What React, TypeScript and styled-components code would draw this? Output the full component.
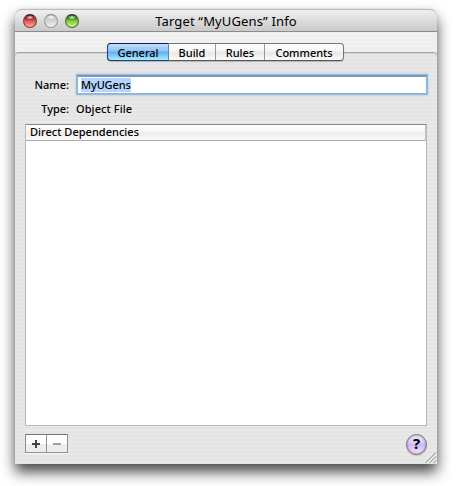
import React from "react";
import styled, { createGlobalStyle } from "styled-components";

const GlobalStyle = createGlobalStyle`
  * { box-sizing: border-box; }
  html, body { margin: 0; background: #fff; overflow: hidden; }
  body { font-family: "Noto Sans", "Open Sans", sans-serif; font-size: 11px; color: #000; }
`;

const Desktop = styled.main`
  width: 457px;
  height: 486px;
  padding: 9px 20px 22px 15px;
  overflow: hidden;
`;

const Window = styled.section`
  position: relative;
  width: 422px;
  height: 455px;
  display: flex;
  flex-direction: column;
  border-radius: 7px 7px 0 0;
  background: repeating-linear-gradient(#e8e8e8 0 2px, #e4e4e4 2px 4px);
  box-shadow: 0 8px 14px rgba(0, 0, 0, 0.72), 0 0 2px rgba(0, 0, 0, 0.12);
`;

const TitleBar = styled.header`
  height: 23px;
  flex: none;
  display: grid;
  grid-template-columns: 70px 1fr 70px;
  align-items: center;
  border: 1px solid #b9b9b9;
  border-width: 1px 0 1px;
  border-bottom-color: #8c8c8c;
  border-radius: 7px 7px 0 0;
  background: linear-gradient(#f0f0f0, #dedede 45%, #c9c9c9);
`;

const Lights = styled.div`
  display: flex;
  gap: 7px;
  padding: 1px 0 0 8px;
`;

const Light = styled.span<{ $tone: "red" | "gray" | "green" }>`
  width: 14px;
  height: 14px;
  border-radius: 50%;
  border: 1px solid ${p => ({ red: "#7a3a3c", gray: "#999", green: "#4d683b" })[p.$tone]};
  border-top-color: ${p => ({ red: "#3a2022", gray: "#858585", green: "#243b1e" })[p.$tone]};
  background: ${p => ({
    red: "radial-gradient(ellipse 4px 2px at 50% 20%, #f6dcdc, transparent), linear-gradient(#642228 5%, #b33a3e 35%, #e0574f 50%, #ffa9a0)",
    gray: "radial-gradient(ellipse 4px 2px at 50% 18%, #fff, transparent), linear-gradient(#c4c4c4, #d3d3d3 50%, #f2f2f2)",
    green: "radial-gradient(ellipse 4px 2px at 50% 20%, #e9f5df, transparent), linear-gradient(#2f5a1d 5%, #569b2a 35%, #7fca3c 50%, #ceff80)",
  })[p.$tone]};
`;

const Title = styled.h1`
  margin: 0;
  text-align: center;
  font-size: 13px;
  font-weight: 400;
  line-height: 20px;
  letter-spacing: 0.14px;
  white-space: nowrap;
`;

const TabStrip = styled.nav`
  height: 31px;
  flex: none;
  display: flex;
  padding-top: 11px;
  background: linear-gradient(rgba(255, 255, 255, 0.42) 0 20px, transparent 20px);
`;

const Rule = styled.span<{ $side: "left" | "right" }>`
  flex: ${p => (p.$side === "left" ? "0 0 92px" : "1")};
  height: 8px;
  margin-top: 9px;
  border-top: 1px solid #a4a4a4;
  border-radius: ${p => (p.$side === "left" ? "4px 0 0 0" : "0 4px 0 0")};
  box-shadow: inset 0 1px #d3d3d3;
`;

const Tabs = styled.div`
  display: flex;
  width: 237px;
  height: 18px;
  border: 1px solid #777;
  border-bottom-color: #565656;
  border-radius: 4px;
  background: linear-gradient(#fff, #f5f5f5 45%, #e8e8e8 50%, #fafafa);
  box-shadow: 0 1px 1px #b4b4b4;
`;

const Tab = styled.button<{ $width: number; $active?: boolean }>`
  width: ${p => p.$width}px;
  height: ${p => (p.$active ? 18 : 16)}px;
  margin: ${p => (p.$active ? "-1px 0 -1px -1px" : "0")};
  padding: 0;
  border: 0 solid #9a9a9a;
  border-right-width: 1px;
  ${p => p.$active && "border: 1px solid #203e79; border-top-color: #141365; border-right-color: #5687b4; border-radius: 4px 0 0 4px;"}
  background: ${p => p.$active ? "linear-gradient(#c2e0fb, #91c3f5 43%, #65adf0 50%, #a7edff)" : "transparent"};
  font: 500 11px/15px "Noto Sans", sans-serif;
  letter-spacing: -0.02px;
  color: #000;
  &:last-child { border-right: 0; }
`;

const Form = styled.div`
  height: 61px;
  flex: none;
  display: grid;
  grid-template-columns: 54px 1fr;
  grid-template-rows: 23px 25px;
  column-gap: 7px;
  align-items: center;
  padding: 10px 10px 0 0;
`;

const Label = styled.label`
  text-align: right;
  line-height: 18px;
  font-weight: 500;
  letter-spacing: -0.02px;
`;

const Field = styled.div`
  height: 19px;
  margin: 0 0 0 1px;
  padding: 1px 3px;
  border: 1px solid #91b2d2;
  border-top: 2px solid #7899b9;
  background: #fff;
  box-shadow: 0 0 0 1px #92b9de, 0 0 2px 1px #9dc7ef;
`;

const Selection = styled.span`
  display: block;
  width: 50px;
  height: 14px;
  background: #b4d5fe;
  line-height: 13px;
  font-weight: 500;
  letter-spacing: -0.14px;
`;

const Value = styled.span`
  line-height: 18px;
  font-weight: 500;
  letter-spacing: 0.08px;
`;

const Table = styled.section`
  width: 402px;
  height: 302px;
  flex: none;
  margin-left: 10px;
  border: 1px solid #b8b8b8;
  border-top-color: #888;
  background: #fff;
`;

const TableHeader = styled.header`
  height: 16px;
  padding-left: 4px;
  border-bottom: 1px solid #aaa;
  border-right: 1px solid #c0c0c0;
  background: linear-gradient(#fff, #f5f5f5 45%, #ededed 50%, #fafafa);
  font-weight: 500;
  line-height: 14px;
  letter-spacing: 0.02px;
`;

const Footer = styled.footer`
  flex: 1;
  display: flex;
  align-items: flex-start;
  justify-content: space-between;
  padding: 8px 10px 0;
`;

const Buttons = styled.div`
  display: flex;
  width: 43px;
  height: 19px;
  border: 1px solid #8f8f8f;
  border-top-color: #747474;
  background: linear-gradient(#fff 0 55%, #ededed 55%);
  box-shadow: 0 1px #f8f8f8;
`;

const SmallButton = styled.button`
  width: 21px;
  height: 17px;
  padding: 0;
  border: 0;
  background: transparent;
  display: grid;
  place-items: center;
  & + & { border-left: 1px solid #929292; }
`;

const Help = styled.button`
  width: 21px;
  height: 21px;
  padding: 0 0 2px;
  border: 1px solid #777;
  border-radius: 50%;
  background: linear-gradient(#f2ebff, #d9c9fa 43%, #ceb8f7 52%, #f8e2ff);
  font: 700 15px/17px "Noto Sans", sans-serif;
  color: #000;
  box-shadow: inset 0 0 2px #706887, 0 1px 1px #bbb;
`;

const Grip = styled.svg`
  position: absolute;
  right: 0;
  bottom: 0;
`;

export default function App() {
  return (
    <Desktop>
      <GlobalStyle />
      <Window>
        <TitleBar>
          <Lights><Light $tone="red" /><Light $tone="gray" /><Light $tone="green" /></Lights>
          <Title>Target “MyUGens” Info</Title>
        </TitleBar>
        <TabStrip>
          <Rule $side="left" />
          <Tabs>
            <Tab $width={62} $active>General</Tab>
            <Tab $width={47}>Build</Tab>
            <Tab $width={49}>Rules</Tab>
            <Tab $width={78}>Comments</Tab>
          </Tabs>
          <Rule $side="right" />
        </TabStrip>
        <Form>
          <Label>Name:</Label>
          <Field><Selection>MyUGens</Selection></Field>
          <Label>Type:</Label>
          <Value>Object File</Value>
        </Form>
        <Table><TableHeader>Direct Dependencies</TableHeader></Table>
        <Footer>
          <Buttons>
            <SmallButton aria-label="Add"><svg width="8" height="8"><path d="M4 0v8M0 4h8" stroke="#444" strokeWidth="2" /></svg></SmallButton>
            <SmallButton aria-label="Remove"><svg width="8" height="8"><path d="M0 4h8" stroke="#a2a2a2" strokeWidth="2" /></svg></SmallButton>
          </Buttons>
          <Help>?</Help>
        </Footer>
        <Grip width="13" height="13" viewBox="0 0 13 13">
          <path d="M1.5 12l10.5-10.5M5.5 12l6.5-6.5M9.5 12l2.5-2.5" stroke="#777" strokeWidth=".9" />
          <path d="M3 12l9-9M7 12l5-5M11 12l1-1" stroke="#fff" strokeWidth=".6" />
        </Grip>
      </Window>
    </Desktop>
  );
}
